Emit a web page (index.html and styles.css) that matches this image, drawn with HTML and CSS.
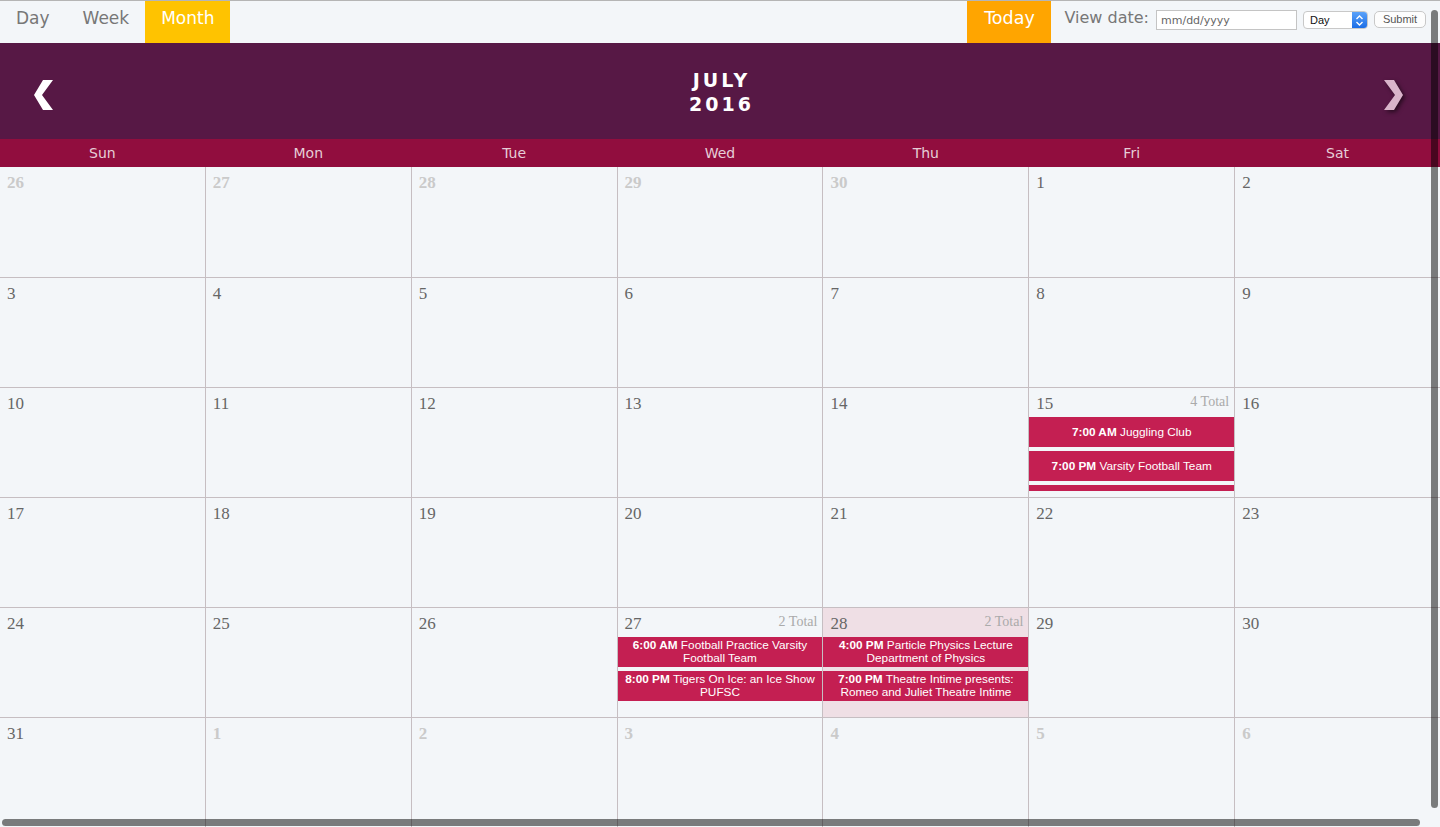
FILE: index.html
```html
<!DOCTYPE html>
<html lang="en">
<head>
<meta charset="utf-8">
<title>Calendar - July 2016</title>
<link rel="stylesheet" href="styles.css">
</head>
<body>
<div class="topbar">
  <nav class="tabs">
    <a class="tab">Day</a>
    <a class="tab">Week</a>
    <a class="tab active">Month</a>
  </nav>
  <div class="tools">
    <a class="today">Today</a>
    <label class="vd-label">View date:</label>
    <input class="date-input" type="text" placeholder="mm/dd/yyyy">
    <div class="select"><span class="sel-text">Day</span><span class="sel-arrow"><svg width="15" height="17" viewBox="0 0 15 17"><path d="M4.5 7 L7.5 4 L10.5 7 M4.5 10 L7.5 13 L10.5 10" fill="none" stroke="#fff" stroke-width="1.4"/></svg></span></div>
    <button class="submit">Submit</button>
  </div>
</div>

<header class="month-head">
  <span class="nav prev"><svg width="20" height="30" viewBox="0 0 20 30"><polygon points="9,0 19,0 8,15 19,30 9,30 0,15" fill="#fff"/></svg></span>
  <h1 class="title"><span>JULY</span><span>2016</span></h1>
  <span class="nav next"><svg width="20" height="30" viewBox="0 0 20 30"><polygon points="11,0 1,0 12,15 1,30 11,30 20,15" fill="#d9b4ca"/></svg></span>
</header>

<div class="dow">
  <div>Sun</div><div>Mon</div><div>Tue</div><div>Wed</div><div>Thu</div><div>Fri</div><div>Sat</div>
</div>

<div class="grid">
  <div class="cell other"><div class="cell-head"><span class="num">26</span></div></div>
  <div class="cell other"><div class="cell-head"><span class="num">27</span></div></div>
  <div class="cell other"><div class="cell-head"><span class="num">28</span></div></div>
  <div class="cell other"><div class="cell-head"><span class="num">29</span></div></div>
  <div class="cell other"><div class="cell-head"><span class="num">30</span></div></div>
  <div class="cell"><div class="cell-head"><span class="num">1</span></div></div>
  <div class="cell"><div class="cell-head"><span class="num">2</span></div></div>

  <div class="cell"><div class="cell-head"><span class="num">3</span></div></div>
  <div class="cell"><div class="cell-head"><span class="num">4</span></div></div>
  <div class="cell"><div class="cell-head"><span class="num">5</span></div></div>
  <div class="cell"><div class="cell-head"><span class="num">6</span></div></div>
  <div class="cell"><div class="cell-head"><span class="num">7</span></div></div>
  <div class="cell"><div class="cell-head"><span class="num">8</span></div></div>
  <div class="cell"><div class="cell-head"><span class="num">9</span></div></div>

  <div class="cell"><div class="cell-head"><span class="num">10</span></div></div>
  <div class="cell"><div class="cell-head"><span class="num">11</span></div></div>
  <div class="cell"><div class="cell-head"><span class="num">12</span></div></div>
  <div class="cell"><div class="cell-head"><span class="num">13</span></div></div>
  <div class="cell"><div class="cell-head"><span class="num">14</span></div></div>
  <div class="cell">
    <div class="cell-head"><span class="num">15</span><span class="total">4 Total</span></div>
    <div class="events">
      <div class="event"><span><b>7:00 AM</b> Juggling Club</span></div>
      <div class="event"><span><b>7:00 PM</b> Varsity Football Team</span></div>
      <div class="event"><span><b>7:30 PM</b> Frosh Camp Princeton</span></div>
    </div>
  </div>
  <div class="cell"><div class="cell-head"><span class="num">16</span></div></div>

  <div class="cell"><div class="cell-head"><span class="num">17</span></div></div>
  <div class="cell"><div class="cell-head"><span class="num">18</span></div></div>
  <div class="cell"><div class="cell-head"><span class="num">19</span></div></div>
  <div class="cell"><div class="cell-head"><span class="num">20</span></div></div>
  <div class="cell"><div class="cell-head"><span class="num">21</span></div></div>
  <div class="cell"><div class="cell-head"><span class="num">22</span></div></div>
  <div class="cell"><div class="cell-head"><span class="num">23</span></div></div>

  <div class="cell"><div class="cell-head"><span class="num">24</span></div></div>
  <div class="cell"><div class="cell-head"><span class="num">25</span></div></div>
  <div class="cell"><div class="cell-head"><span class="num">26</span></div></div>
  <div class="cell">
    <div class="cell-head"><span class="num">27</span><span class="total">2 Total</span></div>
    <div class="events">
      <div class="event"><span><b>6:00 AM</b> Football Practice Varsity Football Team</span></div>
      <div class="event"><span><b>8:00 PM</b> Tigers On Ice: an Ice Show PUFSC</span></div>
    </div>
  </div>
  <div class="cell today-cell">
    <div class="cell-head"><span class="num">28</span><span class="total">2 Total</span></div>
    <div class="events">
      <div class="event"><span><b>4:00 PM</b> Particle Physics Lecture Department of Physics</span></div>
      <div class="event"><span><b>7:00 PM</b> Theatre Intime presents: Romeo and Juliet Theatre Intime</span></div>
    </div>
  </div>
  <div class="cell"><div class="cell-head"><span class="num">29</span></div></div>
  <div class="cell"><div class="cell-head"><span class="num">30</span></div></div>

  <div class="cell"><div class="cell-head"><span class="num">31</span></div></div>
  <div class="cell other"><div class="cell-head"><span class="num">1</span></div></div>
  <div class="cell other"><div class="cell-head"><span class="num">2</span></div></div>
  <div class="cell other"><div class="cell-head"><span class="num">3</span></div></div>
  <div class="cell other"><div class="cell-head"><span class="num">4</span></div></div>
  <div class="cell other"><div class="cell-head"><span class="num">5</span></div></div>
  <div class="cell other"><div class="cell-head"><span class="num">6</span></div></div>
</div>

<div class="scroll-v"></div>
<div class="scroll-h"></div>
</body>
</html>
```

FILE: styles.css
```css
html, body {
  margin: 0;
  padding: 0;
  overflow: hidden;
  height: 100%;
}
body {
  background: #f3f6f9;
  font-family: "DejaVu Sans", Verdana, sans-serif;
}

/* top bar */
.topbar {
  display: flex;
  height: 42px;
  border-top: 1px solid #b5b5b5;
  background: #f3f6f9;
}
.tabs {
  display: flex;
}
.tab {
  display: block;
  height: 42px;
  padding: 0 16px;
  line-height: 35px;
  font-size: 17px;
  color: #777;
  cursor: pointer;
}
.tab:first-child {
  padding-left: 16px;
  padding-right: 17px;
}
.tab.active {
  background: #ffc300;
  color: #fff;
}
.tools {
  margin-left: auto;
  display: flex;
  align-items: flex-start;
  padding-right: 14px;
}
.today {
  display: block;
  width: 84px;
  height: 42px;
  background: #ffa500;
  color: #fff;
  font-size: 17.5px;
  line-height: 35px;
  text-align: center;
  margin-right: 13px;
}
.vd-label {
  margin-top: 7px;
  font-size: 16px;
  line-height: 20px;
  color: #777;
  margin-right: 7px;
}
.date-input {
  margin-top: 9px;
  width: 141px;
  height: 20px;
  box-sizing: border-box;
  border: 1px solid #c4c4c4;
  background: #fff;
  padding: 0 0 0 4px;
  font-family: "DejaVu Sans", sans-serif;
  font-size: 11px;
  outline: none;
}
.date-input::placeholder {
  color: #666;
}
.select {
  margin: 10px 0 0 6px;
  width: 65px;
  height: 18px;
  box-sizing: border-box;
  border: 1px solid #c8c8c8;
  border-radius: 4px;
  background: #fff;
  display: flex;
  align-items: stretch;
  overflow: hidden;
}
.sel-text {
  flex: 1;
  font-family: "Liberation Sans", Arial, sans-serif;
  font-size: 11px;
  line-height: 16px;
  padding-left: 6px;
  color: #111;
}
.sel-arrow {
  width: 15px;
  background: linear-gradient(#5aa2fa, #1c6ee6);
  display: flex;
  align-items: center;
  justify-content: center;
}
.sel-arrow svg {
  display: block;
}
.submit {
  margin: 10px 0 0 6px;
  width: 52px;
  height: 17px;
  box-sizing: border-box;
  border: 1px solid #c8c8c8;
  border-radius: 5px;
  background: #fdfdfd;
  font-family: "Liberation Sans", Arial, sans-serif;
  font-size: 11px;
  color: #555;
  padding: 0;
  line-height: 15px;
}

/* month header */
.month-head {
  display: grid;
  grid-template-columns: 1fr auto 1fr;
  align-items: center;
  height: 96px;
  background: #571845;
}
.nav {
  display: block;
  width: 20px;
  height: 30px;
  margin-top: 8px;
}
.nav svg { display: block; }
.prev {
  justify-self: start;
  margin-left: 34px;
}
.next {
  justify-self: end;
  margin-right: 37px;
  filter: drop-shadow(2px 2px 2px rgba(0, 0, 0, 0.55));
}
.title {
  margin: 1px 0 0;
  display: flex;
  flex-direction: column;
  align-items: center;
  color: #fff;
  font-size: 19px;
  font-weight: bold;
  line-height: 24px;
  letter-spacing: 3px;
  padding-left: 3px;
}

/* day of week row */
.dow {
  display: grid;
  grid-template-columns: repeat(7, 1fr);
  column-gap: 1px;
  height: 28px;
  background: #910d3e;
}
.dow div {
  text-align: center;
  font-size: 14px;
  line-height: 28px;
  color: #e6cdd7;
}

/* calendar grid */
.grid {
  display: grid;
  grid-template-columns: repeat(7, 1fr);
  grid-template-rows: 110px repeat(5, 109px);
  gap: 1px;
  background: #c6bec2;
}
.cell {
  background: #f3f6f9;
  overflow: hidden;
}
.cell.today-cell {
  background: #efdfe5;
}
.cell-head {
  display: flex;
  justify-content: space-between;
  align-items: flex-start;
  height: 29px;
  box-sizing: border-box;
  padding: 6px 5px 0 7px;
  font-family: "Liberation Serif", Georgia, serif;
}
.num {
  font-size: 17px;
  line-height: 20px;
  color: #666;
}
.other .num {
  color: #cacaca;
  font-weight: bold;
}
.total {
  font-size: 14px;
  line-height: 16px;
  color: #aaa;
}
.events {
  display: flex;
  flex-direction: column;
  gap: 4px;
  max-height: 74px;
  overflow: hidden;
}
.event {
  flex: none;
  min-height: 30px;
  box-sizing: border-box;
  padding: 2px 6px;
  display: flex;
  align-items: center;
  justify-content: center;
  text-align: center;
  background: #c41f52;
  color: #fff;
  font-family: "Liberation Sans", Arial, sans-serif;
  font-size: 11.8px;
  line-height: 13px;
}
.event b {
  font-weight: bold;
}

/* overlay scrollbars */
.scroll-v {
  position: fixed;
  left: 1431px;
  top: 10px;
  width: 7px;
  height: 798px;
  border-radius: 4px;
  background: rgba(0, 0, 0, 0.5);
}
.scroll-h {
  position: fixed;
  left: 2px;
  top: 819px;
  width: 1418px;
  height: 7px;
  border-radius: 4px;
  background: rgba(0, 0, 0, 0.5);
}
```
